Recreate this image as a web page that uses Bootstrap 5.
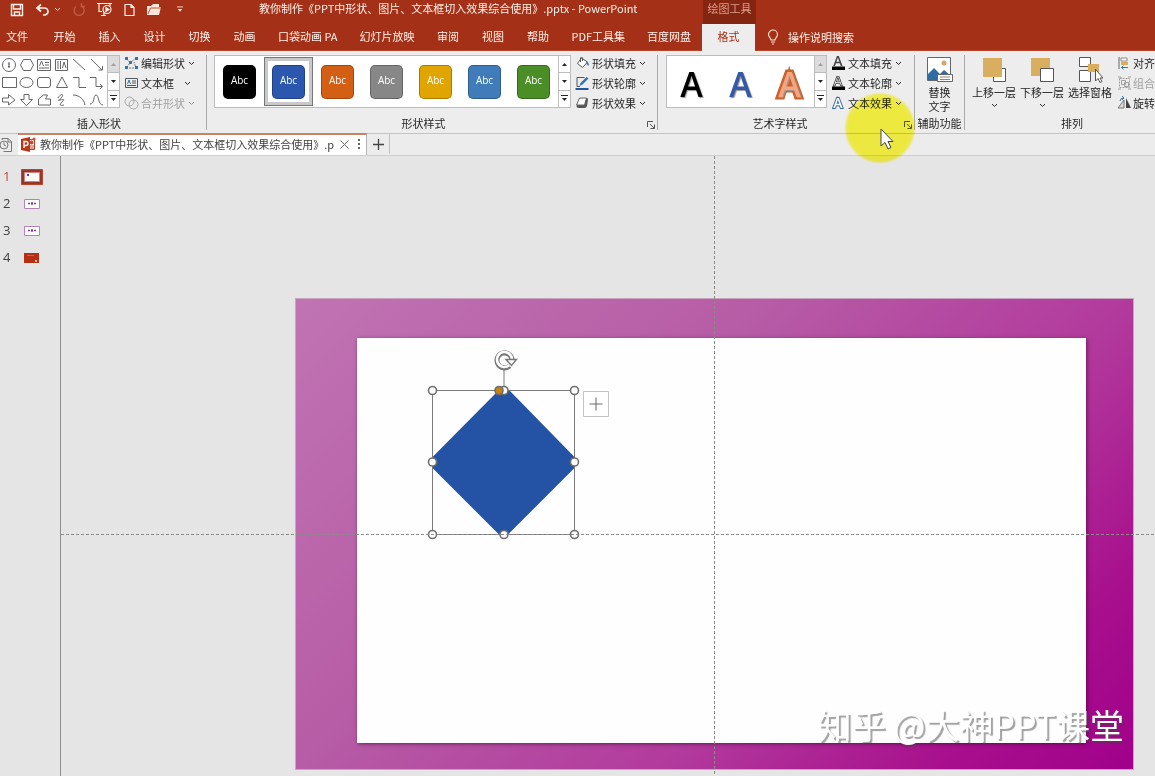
<!DOCTYPE html>
<html lang="zh-CN">
<head>
<meta charset="utf-8">
<meta name="viewport" content="width=device-width, initial-scale=1">
<title>PowerPoint</title>
<link href="https://cdn.jsdelivr.net/npm/bootstrap@5.3.0/dist/css/bootstrap.min.css" rel="stylesheet">
<style>
  body { font: 11px/16px "Noto Sans CJK SC", "Open Sans", sans-serif; color: #262626; background: #e5e5e5; }
  button { font: inherit; color: inherit; background: none; border: 0; padding: 0; }
  svg { display: block; flex: none; }
  .app-head { background: #a43117; color: #fff1ea; }
  .title-row { height: 24px; padding-left: 10px; }
  .quick-bar { gap: 11px; padding-bottom: 5px; }
  .doc-title { margin-left: 76px; padding-bottom: 8px; white-space: pre; }
  .tool-context { background: #842512; color: #dd9d8c; width: 53px; height: 24px; padding-bottom: 8px; left: 703px; top: 0; }
  .menu-row { height: 27px; border-bottom: 1px solid #b8442c; }
  .menu-row .nav-link { color: #fff1ea; padding: 4px 11px; min-width: 45px; white-space: nowrap; text-align: center; border-radius: 0; }
  .menu-row .file-link { padding: 4px 14px 4px 6px; min-width: 0; }
  .menu-row .nav-link.active { color: #a43117; background: #ededed; width: 53px; height: 27px; }
  .ribbon { background: #ededed; height: 83px; border-bottom: 1px solid #c4c4c4; }
  .rgroup { border-right: 1px solid #a9a9a9; margin: 4px 0 3px; flex: none; position: relative; }
  .rgroup-body { height: 60px; }
  .rgroup-name { line-height: 16px; text-align: center; }
  .gallery { background: #fff; border: 1px solid #bdbdbd; height: 53px; }
  .steps { width: 12px; border-left: 1px solid #bdbdbd; }
  .steps button { flex: 1; display: flex; align-items: center; justify-content: center; }
  .steps button + button { border-top: 1px solid #bdbdbd; }
  .steps .off { background: #dcdcdc; }
  .cmds button { height: 20px; display: flex; align-items: center; gap: 2px; white-space: nowrap; }
  .cmds { margin-top: -2px; }
  .cmds .caret { margin-left: 1px; }
  .off-text { color: #a0a0a0; }
  .swatch-cell { width: 49px; height: 49px; margin-top: 1px; display: flex; align-items: center; justify-content: center; }
  .swatch-cell.picked { border: 1px solid #777; box-shadow: inset 0 0 0 3px #c9c9c9; }
  .swatch { width: 33px; height: 34px; border-radius: 5px; color: #fff; font: 10px/29px "Open Sans", sans-serif; border: 1px solid rgba(0,0,0,.25); text-align: center; }
  .art-cell { width: 49px; font: 600 34px/51px "Open Sans", sans-serif; text-shadow: 1px 1px 1px #999; padding-top: 3px; }
  .art-cell.outlined { -webkit-text-stroke: 5px #c9622c; paint-order: stroke; }
  .art-outline { font: 600 34px "Open Sans", sans-serif; }
  .glyph { font: 600 14px "Open Sans", sans-serif; }
  .launcher { position: absolute; right: 2px; bottom: 1px; }
  .big-btn { width: 48px; line-height: 14px; display: flex; flex-direction: column; align-items: center; white-space: nowrap; }
  .big-btn svg + span { margin-top: 2px; }
  .big-btn span { display: block; }
  .doc-row { height: 22px; background: #ececec; border-bottom: 1px solid #cfcfcf; }
  .doc-row > * { flex: none; }
  .doc-tab { width: 349px; height: 22px; margin-top: -1px; background: #fff; border-top: 2px solid #c98263; border-right: 1px solid #b5b5b5; padding: 0 5px 2px 3px; color: #404040; }
  .new-tab { width: 23px; height: 20px; border-right: 1px solid #c4c4c4; }
  .thumbs { width: 61px; border-right: 1px solid #8f8f8f; padding-top: 7px; flex: none; }
  .thumbs a { height: 27px; padding-left: 3px; display: flex; align-items: center; text-decoration: none; color: #404040; font: 13px/20px "Open Sans", sans-serif; }
  .thumbs a span { width: 18px; padding-bottom: 1px; }
  .thumbs a.now { color: #c0492c; }
  .stage { overflow: hidden; position: relative; }
  .slide-page { width: calc(100% - 255px); aspect-ratio: 16 / 9; margin: 142px 0 6px 234px; padding: 40px 48px 27px 62px; outline: 1px solid #c7a5c1; outline-offset: -1px;
    background: linear-gradient(135deg, #c074b3 0%, #b75ca6 36%, #b23a9d 64%, #a80f8d 85%, #a0008a 100%); }
  .slide-card { background: #fefefe; height: 100%; box-shadow: 1px 1px 4px rgba(60,0,50,.6); }
  .slide-card svg { margin-left: 68px; }
  .guide-v { position: absolute; left: 653px; top: 0; bottom: 0; width: 1px; background: repeating-linear-gradient(#8b8b8b 0 3px, transparent 3px 5px); }
  .guide-h { position: absolute; top: 378px; left: 0; right: 0; height: 1px; background: repeating-linear-gradient(90deg, #8b8b8b 0 3px, transparent 3px 5px); }
  .watermark { position: absolute; right: 31px; bottom: 29px; font-size: 34px; line-height: 44px; color: #fff; text-shadow: 2px 2px 1px rgba(70,70,70,.5); white-space: nowrap; }
  .click-halo { position: absolute; left: 844px; top: 92px; width: 72px; height: 72px; border-radius: 50%; background: radial-gradient(circle, #fffb44 0 60%, #fffb60 65%, rgba(255,251,120,0) 71%); mix-blend-mode: multiply; pointer-events: none; }
  .pointer { position: absolute; left: 880px; top: 128px; pointer-events: none; }
</style>
</head>
<body class="min-vh-100 d-flex flex-column position-relative overflow-hidden">
<svg width="0" height="0" class="position-absolute" aria-hidden="true">
  <symbol id="caret" viewBox="0 0 7 5"><path d="M1 1l2.500 2.500L6 1" fill="none" stroke="currentColor"/></symbol>
  <symbol id="up" viewBox="0 0 5 3"><path d="M0 3h5L2.500 0z" fill="currentColor"/></symbol>
  <symbol id="down" viewBox="0 0 5 3"><path d="M0 0h5L2.500 3z" fill="currentColor"/></symbol>
  <symbol id="more" viewBox="0 0 7 7"><path d="M0 .5h7" stroke="currentColor"/><path d="M1 3h5L3.500 6z" fill="currentColor"/></symbol>
  <symbol id="launch" viewBox="0 0 8 8"><path d="M.5 6V.5H6M3 3l4 4M7.500 3.500v4h-4" fill="none" stroke="#555"/></symbol>
</svg>

<header class="app-head">
  <div class="title-row d-flex align-items-center position-relative">
    <div class="quick-bar d-flex align-items-center">
      <button aria-label="保存"><svg width="14" height="14" viewBox="0 0 14 14" fill="none" stroke="#fff1ea" stroke-width="1.400"><path d="M1.500 1.500h11v11h-11zM3.500 1.500v4.500h7V1.500M4.500 12.500v-3.500h5v3.500"/></svg></button>
      <button aria-label="撤消" class="d-flex align-items-center"><svg width="15" height="14" viewBox="0 0 15 14" fill="none" stroke="#fff1ea" stroke-width="1.700"><path d="M6 1.500L2 5l4 3.500M2 5h7.500a3.500 3.500 0 0 1 0 7H8"/></svg><svg class="ms-1" width="7" height="5"><use href="#caret"/></svg></button>
      <button aria-label="重做"><svg width="14" height="14" viewBox="0 0 14 14" fill="none" stroke="#bd5b45" stroke-width="1.400"><path d="M9.500 3A5 5 0 1 1 4 3.500M9.500 0v3.500H13"/></svg></button>
      <button aria-label="放映"><svg width="16" height="15" viewBox="0 0 16 15" fill="none" stroke="#fff1ea" stroke-width="1.200"><path d="M0 1.500h15M2 1.500v8h3M13 1.500v3M4 13.500h5M7 10v3"/><circle cx="10" cy="7.500" r="4"/><path d="M9 5.500v4l3-2z" fill="#fff1ea"/></svg></button>
      <button aria-label="新建"><svg width="11" height="14" viewBox="0 0 11 14" fill="none" stroke="#fff1ea" stroke-width="1.200"><path d="M1 1.500h6l3 3v8H1zM7 1.500v3h3"/></svg></button>
      <button aria-label="打开"><svg width="16" height="13" viewBox="0 0 16 13" fill="#ffe6dc"><path d="M1 12V3h4l2-2h6v3h2l-2 8z"/><path d="M2 11l2.500-6H15" fill="none" stroke="#a43117" stroke-width=".8"/></svg></button>
      <button aria-label="自定义快速访问工具栏" class="ms-1"><svg width="6" height="7"><use href="#more"/></svg></button>
    </div>
    <div class="doc-title">教你制作《PPT中形状、图片、文本框切入效果综合使用》.pptx - PowerPoint</div>
    <div class="tool-context position-absolute d-flex align-items-center justify-content-center">绘图工具</div>
  </div>
  <nav class="menu-row nav flex-nowrap">
    <a class="nav-link file-link" href="#">文件</a>
    <a class="nav-link" href="#">开始</a>
    <a class="nav-link" href="#">插入</a>
    <a class="nav-link" href="#">设计</a>
    <a class="nav-link" href="#">切换</a>
    <a class="nav-link" href="#">动画</a>
    <a class="nav-link" href="#">口袋动画 PA</a>
    <a class="nav-link" href="#">幻灯片放映</a>
    <a class="nav-link" href="#">审阅</a>
    <a class="nav-link" href="#">视图</a>
    <a class="nav-link" href="#">帮助</a>
    <a class="nav-link" href="#">PDF工具集</a>
    <a class="nav-link" href="#">百度网盘</a>
    <a class="nav-link active" href="#" aria-current="page">格式</a>
    <a class="nav-link d-flex align-items-center" href="#"><svg class="me-2" width="14" height="16" viewBox="0 0 14 16" fill="none" stroke="#ffdccb" stroke-width="1.200"><path d="M5 11c0-2-2.500-3-2.500-5.500a4.500 4.500 0 0 1 9 0C11.500 8 9 9 9 11zM5 13h4M6 15h2"/></svg>操作说明搜索</a>
  </nav>
</header>

<section class="ribbon d-flex overflow-hidden">
  <div class="rgroup" style="width:207px">
    <div class="rgroup-body d-flex">
      <div class="gallery d-flex border-start-0">
        <svg width="107" height="51" viewBox="0 0 107 51" fill="none" stroke="#666" role="img" aria-label="形状">
          <circle cx="9" cy="9" r="6.500"/><path d="M9 6v6M8 8h2M8 10.500h2"/>
          <path d="M20.500 9l3-5.500h7l3 5.500-3 5.500h-7z"/>
          <path d="M37.500 3.500h13v11h-13zM45 6.500h4M45 9h4M39 12h10M39.500 10l2-5 2 5"/>
          <path d="M55.500 3.500h12v11h-12zM58 5v8M60.500 5v8M62.500 12l1.500-6 2 6"/>
          <path d="M73 3l12 11M91 3l11 11M102.500 10v4h-4"/>
          <path d="M2.500 21.500h14v10h-14z"/><ellipse cx="26.500" cy="26.500" rx="6.500" ry="5"/><rect x="37.500" y="21.500" width="13" height="10" rx="2.500"/><path d="M62 21l5.500 10.500h-11z"/>
          <path d="M73 21.500h6v10h7M90 21.500h6v9h6.500M100 28l2.500 2.500-2.500 2.500"/>
          <path d="M2.500 42v4h6v3l6.500-5-6.500-5.500V42zM24 38.500v5h-3.500l6 6 6-6H29v-5z"/>
          <path d="M38.500 49v-6l5-4h4l-2 4h5v6zM58 42c3-5 6-4 4-1s-6 4-2 3 5-1 2 2-2 4 2 3"/>
          <path d="M73 39c6 0 11 4 12 10M90 48c5 0 3-9 6-9s2 10 7 10"/>
        </svg>
        <div class="steps d-flex flex-column">
          <button class="off off-text" aria-label="上一行"><svg width="5" height="3"><use href="#up"/></svg></button>
          <button aria-label="下一行"><svg width="5" height="3"><use href="#down"/></svg></button>
          <button aria-label="更多形状"><svg width="7" height="7"><use href="#more"/></svg></button>
        </div>
      </div>
      <div class="cmds ms-1">
        <button><svg width="15" height="14" viewBox="0 0 15 14"><path d="M3 3l3 4-4 5M6 7l6-5M2 12h10l-2-6" fill="none" stroke="#777" stroke-dasharray="2 1"/><path d="M1 1h3v3H1zM11 1h3v3h-3zM1 10h3v3H1zM11 10h3v3h-3zM5 5h3v3H5z" fill="#3274ab"/></svg>编辑形状<svg class="caret" width="7" height="5"><use href="#caret"/></svg></button>
        <button><svg width="15" height="12" viewBox="0 0 15 12" fill="none" stroke="#555"><path d="M1.500 1.500h12v9h-12zM8 4h4M8 6h4M3 8.500h9"/><path d="M3.500 7l1.500-4 1.500 4" stroke="#3274ab"/></svg>文本框<svg class="caret ms-2" width="7" height="5"><use href="#caret"/></svg></button>
        <button class="off-text"><svg width="15" height="14" viewBox="0 0 15 14" fill="none" stroke="#a8a8a8"><circle cx="5.500" cy="5.500" r="4.500"/><circle cx="9.500" cy="8.500" r="4.500"/></svg>合并形状<svg class="caret" width="7" height="5"><use href="#caret"/></svg></button>
      </div>
    </div>
    <div class="rgroup-name pe-2">插入形状</div>
  </div>

  <div class="rgroup" style="width:451px;padding-left:7px">
    <div class="rgroup-body d-flex">
      <div class="gallery d-flex">
        <button class="swatch-cell"><span class="swatch" style="background:#000">Abc</span></button>
        <button class="swatch-cell picked"><span class="swatch" style="background:#2b58ae">Abc</span></button>
        <button class="swatch-cell"><span class="swatch" style="background:#d35f14">Abc</span></button>
        <button class="swatch-cell"><span class="swatch" style="background:#878787">Abc</span></button>
        <button class="swatch-cell"><span class="swatch" style="background:#e1a500">Abc</span></button>
        <button class="swatch-cell"><span class="swatch" style="background:#3f7cb9">Abc</span></button>
        <button class="swatch-cell"><span class="swatch" style="background:#4b8e25">Abc</span></button>
        <div class="steps d-flex flex-column">
          <button aria-label="上一行"><svg width="5" height="3"><use href="#up"/></svg></button>
          <button aria-label="下一行"><svg width="5" height="3"><use href="#down"/></svg></button>
          <button aria-label="更多样式"><svg width="7" height="7"><use href="#more"/></svg></button>
        </div>
      </div>
      <div class="cmds ms-1">
        <button><svg width="15" height="14" viewBox="0 0 14 14"><path d="M6 2l6 4-5 5.500-5-4z" fill="#fff" stroke="#555"/><path d="M5 6V2q1-2 2 0v3" fill="none" stroke="#555"/><path d="M11 5q3 2 2 5l-2-2z" fill="#3274ab"/></svg>形状填充<svg class="caret" width="7" height="5"><use href="#caret"/></svg></button>
        <button><svg width="15" height="14" viewBox="0 0 14 14"><path d="M9 1.500H1.500v9h3" fill="none" stroke="#555"/><path d="M4 10l1-3 6-6 2 1.500-6 6z" fill="#3274ab"/><path d="M0 12h13v2H0z" fill="#24579e"/></svg>形状轮廓<svg class="caret" width="7" height="5"><use href="#caret"/></svg></button>
        <button><svg width="15" height="14" viewBox="0 0 14 14"><path d="M4 2h7q2 0 1.500 2l-1 6q-.5 2-2.500 2H3q-2 0-2-2z" fill="#555"/><path d="M4 2h7l-2 7H1z" fill="#fff" stroke="#666"/></svg>形状效果<svg class="caret" width="7" height="5"><use href="#caret"/></svg></button>
      </div>
    </div>
    <div class="rgroup-name pe-4">形状样式</div>
    <button class="launcher" aria-label="设置形状格式"><svg width="8" height="8"><use href="#launch"/></svg></button>
  </div>

  <div class="rgroup ps-2" style="width:257px">
    <div class="rgroup-body d-flex">
      <div class="gallery d-flex">
        <button class="art-cell" style="color:#000">A</button>
        <button class="art-cell" style="color:#3559a4">A</button>
        <button class="art-cell outlined" style="color:#f5a57e">A</button>
        <div class="steps d-flex flex-column">
          <button class="off off-text" aria-label="上一行"><svg width="5" height="3"><use href="#up"/></svg></button>
          <button aria-label="下一行"><svg width="5" height="3"><use href="#down"/></svg></button>
          <button aria-label="更多艺术字"><svg width="7" height="7"><use href="#more"/></svg></button>
        </div>
      </div>
      <div class="cmds ms-1">
        <button><svg width="15" height="14" viewBox="0 0 15 14"><text class="glyph" x="7" y="10" text-anchor="middle" fill="#444">A</text><path d="M1 10.500h13V14H1z"/></svg>文本填充<svg class="caret" width="7" height="5"><use href="#caret"/></svg></button>
        <button><svg width="15" height="14" viewBox="0 0 15 14"><text class="glyph" x="7" y="10" text-anchor="middle" fill="#fff" stroke="#444" stroke-width=".8">A</text><path d="M1 10.500h13V14H1z"/></svg>文本轮廓<svg class="caret" width="7" height="5"><use href="#caret"/></svg></button>
        <button><svg width="15" height="14" viewBox="0 0 15 14"><text class="glyph" x="7" y="12" text-anchor="middle" fill="#fff" stroke="#356aae" stroke-width="2" paint-order="stroke">A</text></svg>文本效果<svg class="caret" width="7" height="5"><use href="#caret"/></svg></button>
      </div>
    </div>
    <div class="rgroup-name" style="padding-right:20px">艺术字样式</div>
    <button class="launcher" aria-label="设置文本效果格式"><svg width="8" height="8"><use href="#launch"/></svg></button>
  </div>

  <div class="rgroup" style="width:50px">
    <div class="rgroup-body">
      <button class="big-btn mx-auto"><svg width="27" height="28" viewBox="0 0 27 28"><path d="M1.500 2.500h23v23h-23z" fill="#fff" stroke="#666"/><circle cx="18" cy="8" r="2.500" fill="#d8a468"/><path d="M2 25v-6l6-6 6 6 4-4 6 5v5z" fill="#2f6ca5"/><path d="M11.500 19.500h15v7h-15z" fill="#fff" stroke="#666"/><path d="M14 22h10M14 24.500h10" stroke="#888"/></svg><span>替换</span><span>文字</span></button>
    </div>
    <div class="rgroup-name">辅助功能</div>
  </div>

  <div class="rgroup border-0" style="width:214px">
    <div class="rgroup-body d-flex" style="padding-left:5px">
      <button class="big-btn"><svg width="26" height="28" viewBox="0 0 26 28"><path d="M12.500 13.500h12v13h-12z" fill="#fff" stroke="#555"/><path d="M2 3h19v19H2z" fill="#d9ae5f"/></svg><span>上移一层</span><svg class="mt-1" width="7" height="5"><use href="#caret"/></svg></button>
      <button class="big-btn"><svg width="26" height="28" viewBox="0 0 26 28"><path d="M2 3h19v18H2z" fill="#d9ae5f"/><path d="M11.500 13.500h13v13h-13z" fill="#fff" stroke="#555"/></svg><span>下移一层</span><svg class="mt-1" width="7" height="5"><use href="#caret"/></svg></button>
      <button class="big-btn"><svg width="26" height="28" viewBox="0 0 26 28"><path d="M2.500 2.500h11v9h-11zM2.500 15.500h11v11h-11z" fill="#fff" stroke="#555"/><path d="M11 9h11v8H11z" fill="#d9ae5f"/><path d="M18.500 14v12l2.500-2.500 2 4 2-1-2-3.500h3z" fill="#fff" stroke="#555"/></svg><span>选择窗格</span></button>
      <div class="cmds ps-1">
        <button><svg width="13" height="14" viewBox="1 0 13 14"><path d="M2 1v12" stroke="#666"/><path d="M4 2h6v3H4z" fill="#fff" stroke="#888"/><path d="M4 6h7v3H4z" fill="#d9ae5f"/><path d="M4 11.500h7M6.500 9.500l-2 2 2 2" stroke="#3274ab" fill="none"/></svg>对齐</button>
        <button class="off-text"><svg width="13" height="14" viewBox="1 0 13 14" fill="none" stroke="#a0a0a0"><path d="M2.500 2.500h10v9h-10z" stroke-dasharray="2 1"/><path d="M4.500 4.500h4v4h-4zM7.500 6.500h4v4h-4zM1 1h3v2M14 1h-3M1 13h3M14 13h-3"/></svg>组合</button>
        <button><svg width="13" height="14" viewBox="1 0 13 14"><path d="M7 12V4l-6 8z" fill="#ddd" stroke="#777"/><path d="M9 12V2l5 10z" fill="#444"/><path d="M3 5q0-3 4-3M5 0l2 2-2 2" fill="none" stroke="#3274ab"/></svg>旋转</button>
      </div>
    </div>
    <div class="rgroup-name">排列</div>
  </div>
</section>

<div class="doc-row d-flex">
  <button style="width:18px" aria-label="最近文档"><svg width="14" height="16" viewBox="0 0 14 16" fill="none" stroke="#777"><path d="M2 3V1.500h6l3.500 3v10h-8"/><circle cx="4" cy="8" r="4"/><path d="M4 5.500V8l2 1M8 2v3h3"/></svg></button>
  <div class="doc-tab d-flex align-items-center">
    <svg class="me-1" width="15" height="15" viewBox="0 0 15 15"><path d="M7 2.500h6.500v10H7z" fill="#fff" stroke="#b83e21"/><circle cx="10.500" cy="5.500" r="2" fill="#c74a2d"/><path d="M9 9h4M9 11h4" stroke="#c74a2d"/><path d="M0 2l9-2v15l-9-2z" fill="#b8371b"/><path d="M3 11V4.500h2q2 0 2 2t-2 2H3" fill="none" stroke="#fff" stroke-width="1.300"/><circle cx="13" cy="2" r="1.500" fill="#e04040"/></svg>
    <span class="flex-grow-1 text-nowrap">教你制作《PPT中形状、图片、文本框切入效果综合使用》.p</span>
    <button aria-label="关闭"><svg width="9" height="9" viewBox="0 0 9 9"><path d="M.5.5l8 8M8.500.5l-8 8" stroke="#666"/></svg></button>
    <button class="ms-2" aria-label="菜单"><svg width="4" height="10" viewBox="0 0 4 10" fill="#666"><path d="M1 0h2v2H1zM1 4h2v2H1zM1 8h2v2H1z"/></svg></button>
  </div>
  <button class="new-tab d-flex align-items-center justify-content-center" aria-label="新建标签"><svg width="11" height="11" viewBox="0 0 11 11"><path d="M5.500 0v11M0 5.500h11" stroke="#444" stroke-width="1.300"/></svg></button>
</div>

<main class="d-flex flex-grow-1">
  <nav class="thumbs" aria-label="幻灯片">
    <a class="now" href="#"><span>1</span><svg width="22" height="16" viewBox="0 0 22 16"><path d="M.5.5h21v15H.5z" fill="#8f3a2c" stroke="#c0442c"/><path d="M3.500 3.500h15v9h-15z" fill="#fff" stroke="#e08080"/><path d="M6 5h2v2H6z" fill="#2b58ae"/></svg></a>
    <a href="#"><span>2</span><svg width="22" height="16" viewBox="0 0 22 16"><path d="M3.500 3.500h15v9h-15z" fill="#fff" stroke="#b583b9"/><path d="M7 7.500h2M10 7.500h2M13 7.500h2M11 6v3" stroke="#8a3ca0" stroke-width="1.400"/></svg></a>
    <a href="#"><span>3</span><svg width="22" height="16" viewBox="0 0 22 16"><path d="M3.500 3.500h15v9h-15z" fill="#fff" stroke="#b583b9"/><path d="M7 7.500h2M10 7.500h2M13 7.500h2M11 6v3" stroke="#8a3ca0" stroke-width="1.400"/></svg></a>
    <a href="#"><span>4</span><svg width="22" height="16" viewBox="0 0 22 16"><path d="M3 3h15v10H3z" fill="#b52f14"/><path d="M6 5.500h7" stroke="#e05a30"/><path d="M14 10h2v2h-2z" fill="#f0c0a0"/></svg></a>
  </nav>
  <div class="stage flex-grow-1">
    <div class="slide-page">
      <div class="slide-card">
        <svg width="190" height="210" viewBox="425 338 190 210" role="img" aria-label="菱形">
          <path d="M498 391h12l64.500 66v11l-66 66h-10l-66-66v-11z" fill="#2453a6"/>
          <path d="M432.500 390.500h142v144h-142zM504 390V370" fill="none" stroke="#7a7a7a"/>
          <g fill="none"><path d="M512 360a7.500 7.500 0 1 0-2.500 6" stroke="#777" stroke-width="5"/><path d="M512 360a7.500 7.500 0 1 0-3 5.500" stroke="#fff" stroke-width="2.600"/><path d="M506 359.500h10.500l-5 6z" fill="#fff" stroke="#777" stroke-width="1.400"/></g>
          <g fill="#fff" stroke="#6f6f6f" stroke-width="1.600"><circle cx="432.500" cy="390.500" r="4"/><circle cx="504" cy="390.500" r="4"/><circle cx="574.500" cy="390.500" r="4"/><circle cx="432.500" cy="462" r="4"/><circle cx="574.500" cy="462" r="4"/><circle cx="432.500" cy="534.500" r="4"/><circle cx="504" cy="534.500" r="4"/><circle cx="574.500" cy="534.500" r="4"/><circle cx="499" cy="390.500" r="4" fill="#c8820f"/></g>
          <path d="M583.500 391.500h25v25h-25z" fill="#fff" stroke="#c4c4c4"/><path d="M596 397.500v13M589.500 404h13" stroke="#666"/>
        </svg>
      </div>
    </div>
    <div class="guide-v"></div>
    <div class="guide-h"></div>
    <div class="watermark">知乎 @大神PPT课堂</div>
  </div>
</main>

<div class="click-halo"></div>
<svg class="pointer" width="14" height="22" viewBox="0 0 14 22"><path d="M1 1v17l4-3.500 3 6.500 3-1.500-3-6h5z" fill="#fff" stroke="#444"/></svg>
<script src="https://cdn.jsdelivr.net/npm/bootstrap@5.3.0/dist/js/bootstrap.bundle.min.js"></script>
</body>
</html>
